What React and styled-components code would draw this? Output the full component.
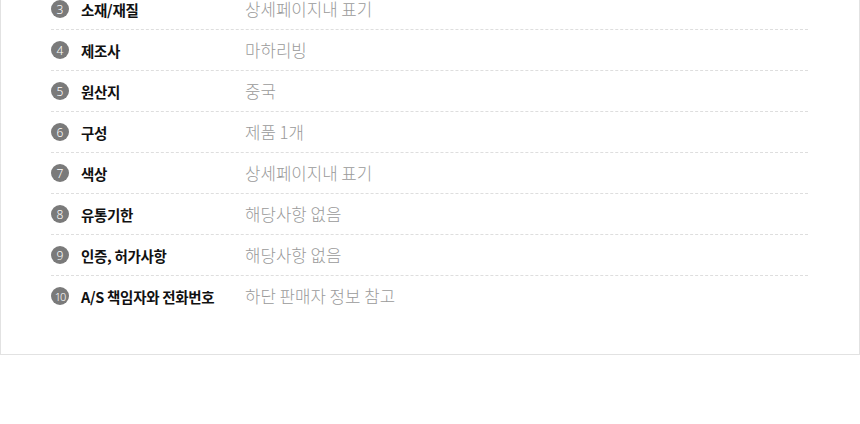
import React from "react";
import styled, { createGlobalStyle } from "styled-components";

const GlobalStyle = createGlobalStyle`
  html, body {
    margin: 0;
    padding: 0;
    background: #ffffff;
    font-family: "Noto Sans CJK KR", "Noto Sans", sans-serif;
  }
`;

const Page = styled.div`
  width: 860px;
  height: 424px;
  overflow: hidden;
  background: #ffffff;
`;

const Card = styled.section`
  box-sizing: border-box;
  width: 860px;
  border: 1px solid #e2e2e2;
  border-top: none;
  padding: 0 51px 37px 50px;
`;

const List = styled.ul`
  list-style: none;
  margin: -11px 0 0;
  padding: 0;
`;

const Row = styled.li`
  display: flex;
  align-items: center;
  height: 41px;
  border-bottom: 1px dashed ${(p) => (p.$last ? "transparent" : "#dedede")};
  box-sizing: border-box;
`;

const Label = styled.div`
  display: flex;
  align-items: center;
  gap: 12px;
  width: 194px;
  flex-shrink: 0;
  font-size: 14.5px;
  font-weight: 700;
  color: #111111;
  letter-spacing: -0.3px;
`;

const Badge = styled.span`
  display: inline-flex;
  align-items: center;
  justify-content: center;
  width: 18px;
  height: 18px;
  border-radius: 50%;
  background: #7a7a7a;
  color: #ffffff;
  font-family: "Noto Sans", sans-serif;
  font-size: ${(p) => (p.$wide ? "11px" : "12px")};
  font-weight: 300;
  letter-spacing: ${(p) => (p.$wide ? "-1px" : "0")};
`;

const Value = styled.div`
  font-size: 16.8px;
  font-weight: 300;
  color: #9a9a9a;
`;

const items = [
  { no: 3, label: "소재/재질", value: "상세페이지내 표기" },
  { no: 4, label: "제조사", value: "마하리빙" },
  { no: 5, label: "원산지", value: "중국" },
  { no: 6, label: "구성", value: "제품 1개" },
  { no: 7, label: "색상", value: "상세페이지내 표기" },
  { no: 8, label: "유통기한", value: "해당사항 없음" },
  { no: 9, label: "인증, 허가사항", value: "해당사항 없음" },
  { no: 10, label: "A/S 책임자와 전화번호", value: "하단 판매자 정보 참고" },
];

export default function App() {
  return (
    <Page>
      <GlobalStyle />
      <Card>
        <List>
          {items.map((item, i) => (
            <Row key={item.no} $last={i === items.length - 1}>
              <Label>
                <Badge $wide={item.no > 9}>{item.no}</Badge>
                {item.label}
              </Label>
              <Value>{item.value}</Value>
            </Row>
          ))}
        </List>
      </Card>
    </Page>
  );
}
